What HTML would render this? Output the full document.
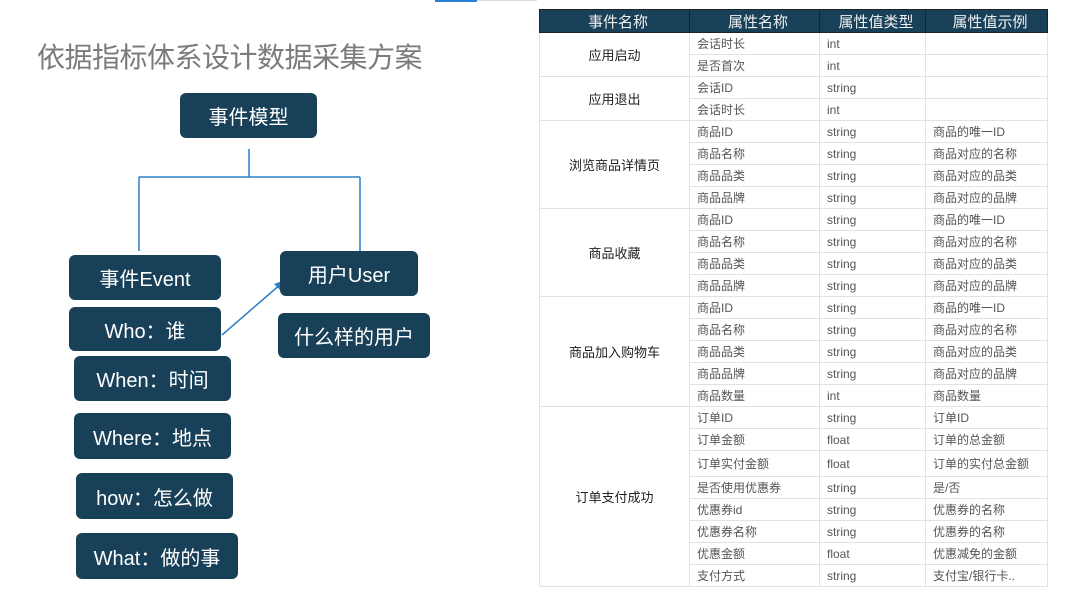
<!DOCTYPE html>
<html><head><meta charset="utf-8"><style>
body{margin:0;width:1080px;height:611px;background:#fff;position:relative;overflow:hidden;font-family:"Liberation Sans","Noto Sans CJK SC",sans-serif}
.b{position:absolute;background:#184058;color:#fff;border-radius:6px;display:flex;align-items:center;justify-content:center;font-size:20px}
.t{position:absolute;left:37px;top:36px;font-size:28px;color:#7b7b7b;letter-spacing:-0.5px}
table{position:absolute;left:539px;top:9px;width:508px;border-collapse:collapse;table-layout:fixed;font-size:12px;color:#555}
td,th{border:1px solid #e2e2e6;padding:0 0 0 7px;height:21px;text-align:left;white-space:nowrap;overflow:hidden}
th{background:#184058;color:#f0f0f0;font-weight:normal;font-size:15px;text-align:center;height:22px;border-color:#222}
td.c{text-align:center;padding:0;color:#222;font-size:13px}
</style></head><body>
<div style="position:absolute;left:435px;top:0;width:42px;height:2px;background:#2b7fd4"></div>
<div style="position:absolute;left:477px;top:0;width:60px;height:1px;background:#ddd"></div>
<div class="t">依据指标体系设计数据采集方案</div>
<svg style="position:absolute;left:0;top:0" width="540" height="611">
<g stroke="#2d7dc8" stroke-width="1.5" fill="none">
<path d="M249 149V177M139 177H360M139 177V251M360 177V252"/>
<path d="M222 335L282 283"/>
</g>
<path d="M285 280L274 284L280 290Z" fill="#2d7dc8"/>
</svg>
<div class="b" style="left:180px;top:93px;width:137px;height:45px">事件模型</div>
<div class="b" style="left:69px;top:255px;width:152px;height:45px">事件Event</div>
<div class="b" style="left:69px;top:307px;width:152px;height:44px">Who：谁</div>
<div class="b" style="left:280px;top:251px;width:138px;height:45px">用户User</div>
<div class="b" style="left:278px;top:313px;width:152px;height:45px">什么样的用户</div>
<div class="b" style="left:74px;top:356px;width:157px;height:45px">When：时间</div>
<div class="b" style="left:74px;top:413px;width:157px;height:46px">Where：地点</div>
<div class="b" style="left:76px;top:473px;width:157px;height:46px">how：怎么做</div>
<div class="b" style="left:76px;top:533px;width:162px;height:46px">What：做的事</div>
<table>
<colgroup><col style="width:150px"><col style="width:130px"><col style="width:106px"><col style="width:122px"></colgroup>
<tr><th>事件名称</th><th>属性名称</th><th>属性值类型</th><th>属性值示例</th></tr>
<tr><td class="c" rowspan="2">应用启动</td><td>会话时长</td><td>int</td><td></td></tr>
<tr><td>是否首次</td><td>int</td><td></td></tr>
<tr><td class="c" rowspan="2">应用退出</td><td>会话ID</td><td>string</td><td></td></tr>
<tr><td>会话时长</td><td>int</td><td></td></tr>
<tr><td class="c" rowspan="4">浏览商品详情页</td><td>商品ID</td><td>string</td><td>商品的唯一ID</td></tr>
<tr><td>商品名称</td><td>string</td><td>商品对应的名称</td></tr>
<tr><td>商品品类</td><td>string</td><td>商品对应的品类</td></tr>
<tr><td>商品品牌</td><td>string</td><td>商品对应的品牌</td></tr>
<tr><td class="c" rowspan="4">商品收藏</td><td>商品ID</td><td>string</td><td>商品的唯一ID</td></tr>
<tr><td>商品名称</td><td>string</td><td>商品对应的名称</td></tr>
<tr><td>商品品类</td><td>string</td><td>商品对应的品类</td></tr>
<tr><td>商品品牌</td><td>string</td><td>商品对应的品牌</td></tr>
<tr><td class="c" rowspan="5">商品加入购物车</td><td>商品ID</td><td>string</td><td>商品的唯一ID</td></tr>
<tr><td>商品名称</td><td>string</td><td>商品对应的名称</td></tr>
<tr><td>商品品类</td><td>string</td><td>商品对应的品类</td></tr>
<tr><td>商品品牌</td><td>string</td><td>商品对应的品牌</td></tr>
<tr><td>商品数量</td><td>int</td><td>商品数量</td></tr>
<tr><td class="c" rowspan="8">订单支付成功</td><td>订单ID</td><td>string</td><td>订单ID</td></tr>
<tr><td>订单金额</td><td>float</td><td>订单的总金额</td></tr>
<tr><td style="height:25px">订单实付金额</td><td>float</td><td>订单的实付总金额</td></tr>
<tr><td>是否使用优惠券</td><td>string</td><td>是/否</td></tr>
<tr><td>优惠券id</td><td>string</td><td>优惠券的名称</td></tr>
<tr><td>优惠券名称</td><td>string</td><td>优惠券的名称</td></tr>
<tr><td>优惠金额</td><td>float</td><td>优惠减免的金额</td></tr>
<tr><td>支付方式</td><td>string</td><td>支付宝/银行卡..</td></tr>
</table>
</body></html>
